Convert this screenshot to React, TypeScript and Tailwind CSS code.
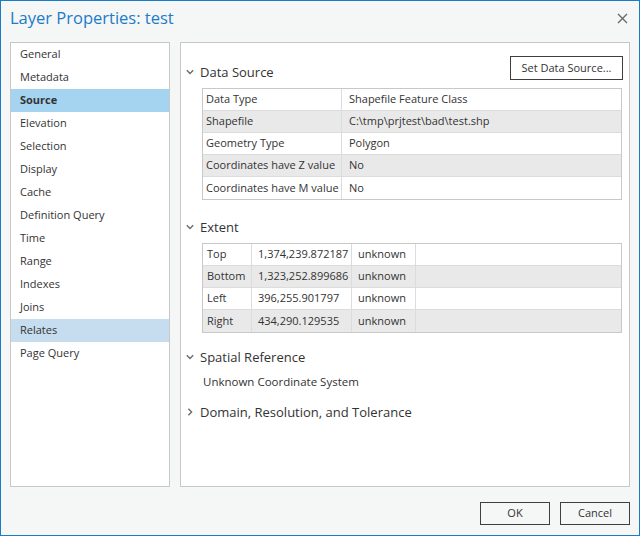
import React from "react";

const navItems = [
  "General",
  "Metadata",
  "Source",
  "Elevation",
  "Selection",
  "Display",
  "Cache",
  "Definition Query",
  "Time",
  "Range",
  "Indexes",
  "Joins",
  "Relates",
  "Page Query",
];

const dataRows: [string, string][] = [
  ["Data Type", "Shapefile Feature Class"],
  ["Shapefile", "C:\\tmp\\prjtest\\bad\\test.shp"],
  ["Geometry Type", "Polygon"],
  ["Coordinates have Z value", "No"],
  ["Coordinates have M value", "No"],
];

const extentRows: [string, string, string][] = [
  ["Top", "1,374,239.872187", "unknown"],
  ["Bottom", "1,323,252.899686", "unknown"],
  ["Left", "396,255.901797", "unknown"],
  ["Right", "434,290.129535", "unknown"],
];

function ChevronDown() {
  return (
    <svg width="8" height="6" viewBox="0 0 8 6" className="shrink-0">
      <path d="M0.8 1.2 L4 4.4 L7.2 1.2" fill="none" stroke="#6b6b6b" strokeWidth="1.4" />
    </svg>
  );
}

function ChevronRight() {
  return (
    <svg width="8" height="8" viewBox="0 0 8 8" className="shrink-0">
      <path d="M2.4 0.8 L5.6 4 L2.4 7.2" fill="none" stroke="#6b6b6b" strokeWidth="1.4" />
    </svg>
  );
}

function SectionHeader({ label, open = true }: { label: string; open?: boolean }) {
  return (
    <div className="flex items-center h-[16px] pl-[4px]">
      <div className="w-[14px] flex items-center">{open ? <ChevronDown /> : <ChevronRight />}</div>
      <span className="text-[13px] leading-[16px] text-[#333]">{label}</span>
    </div>
  );
}

export default function App() {
  return (
    <div
      className="w-[640px] h-[536px] border border-[#1a7bc7] bg-[#f5f6f6] flex flex-col overflow-hidden"
      style={{ fontFamily: '"Open Sans", "Noto Sans", sans-serif' }}
    >
      {/* Title bar */}
      <div className="h-[41px] flex items-start justify-between pl-[9px] pr-[11px]">
        <div className="pt-[5px] text-[16.5px] leading-[24px] text-[#1b7cc9]">Layer Properties: test</div>
        <div className="pt-[12px]">
          <svg width="11" height="11" viewBox="0 0 11 11">
            <path d="M1 1 L10 10 M10 1 L1 10" stroke="#6a6a6a" strokeWidth="1.4" fill="none" />
          </svg>
        </div>
      </div>

      {/* Body */}
      <div className="flex gap-[10px] px-[9px] h-[445px]">
        {/* Nav list */}
        <div className="w-[160px] h-full border border-[#c8c8c8] bg-white flex flex-col">
          {navItems.map((item) => {
            const selected = item === "Source";
            const hovered = item === "Relates";
            return (
              <div
                key={item}
                className={
                  "h-[23px] flex items-center pl-[9px] text-[11px] text-[#333] " +
                  (selected ? "bg-[#a5d4f1] font-bold" : hovered ? "bg-[#c6ddef]" : "")
                }
              >
                {item}
              </div>
            );
          })}
        </div>

        {/* Content */}
        <div className="w-[450px] h-full border border-[#c8c8c8] bg-white flex flex-col pt-[13px] pl-[1px] pr-[6px]">
          <div className="flex items-end justify-between h-[24px]">
            <SectionHeader label="Data Source" />
            <button className="w-[113px] h-[24px] border border-[#3f3f3f] bg-white text-[11px] text-[#333] flex items-center justify-center">
              Set Data Source...
            </button>
          </div>

          <div className="mt-[8px] ml-[20px] mr-[1px] border border-[#c8c8c8] flex flex-col">
            {dataRows.map(([k, v], i) => (
              <div
                key={k}
                className={
                  "h-[22px] flex text-[11px] text-[#333] " +
                  (i % 2 === 1 ? "bg-[#e9e9e9] " : "bg-white ") +
                  (i < dataRows.length - 1 ? "border-b border-[#dcdcdc]" : "")
                }
              >
                <div className="w-[139px] border-r border-[#dcdcdc] pl-[3px] flex items-center whitespace-nowrap">{k}</div>
                <div className="flex-1 pl-[7px] flex items-center whitespace-nowrap">{v}</div>
              </div>
            ))}
          </div>

          <div className="mt-[19px]">
            <SectionHeader label="Extent" />
          </div>

          <div className="mt-[8px] ml-[20px] mr-[1px] border border-[#c8c8c8] flex flex-col">
            {extentRows.map(([a, b, c], i) => (
              <div
                key={a}
                className={
                  "h-[22px] flex text-[11px] text-[#333] " +
                  (i % 2 === 1 ? "bg-[#e9e9e9] " : "bg-white ") +
                  (i < extentRows.length - 1 ? "border-b border-[#dcdcdc]" : "")
                }
              >
                <div className="w-[49px] border-r border-[#dcdcdc] pl-[4px] flex items-center">{a}</div>
                <div className="w-[100px] border-r border-[#dcdcdc] pl-[6px] flex items-center whitespace-nowrap">{b}</div>
                <div className="w-[64px] border-r border-[#dcdcdc] pl-[6px] flex items-center">{c}</div>
                <div className="flex-1" />
              </div>
            ))}
          </div>

          <div className="mt-[16px]">
            <SectionHeader label="Spatial Reference" />
          </div>
          <div className="mt-[9px] pl-[21px] text-[11.5px] leading-[16px] text-[#333]">Unknown Coordinate System</div>
          <div className="mt-[14px]">
            <SectionHeader label="Domain, Resolution, and Tolerance" open={false} />
          </div>
        </div>
      </div>

      {/* Footer */}
      <div className="flex justify-end gap-[10px] pr-[9px] pt-[15px]">
        <button className="w-[70px] h-[23px] border border-[#3f3f3f] bg-[#f5f6f6] text-[11px] text-[#333] flex items-center justify-center">
          OK
        </button>
        <button className="w-[70px] h-[23px] border border-[#3f3f3f] bg-[#f5f6f6] text-[11px] text-[#333] flex items-center justify-center">
          Cancel
        </button>
      </div>
    </div>
  );
}
